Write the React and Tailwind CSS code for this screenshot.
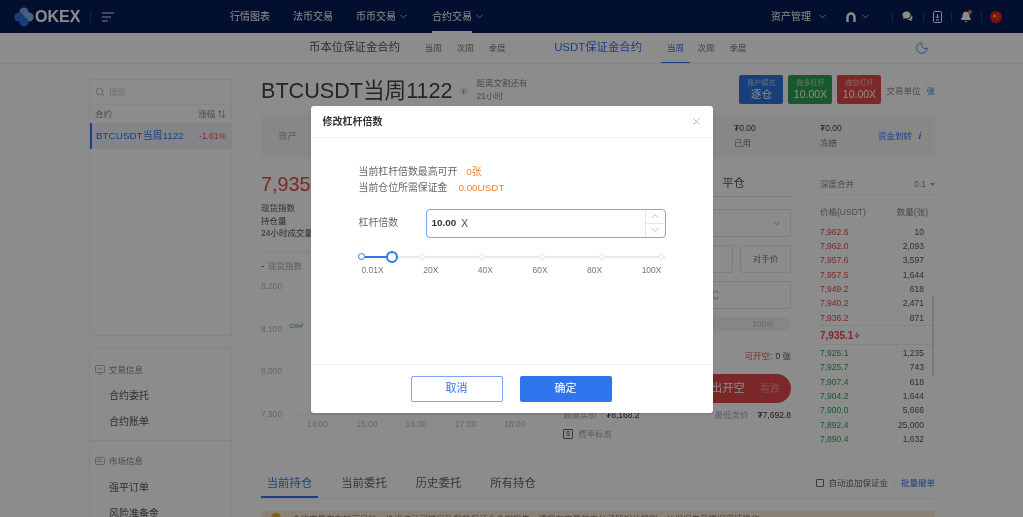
import { ChevronDown, ChevronUp, X, Search, Moon, Bell, ArrowDown } from 'lucide-react'

const font = { fontFamily: '"Liberation Sans", "Noto Sans CJK SC", sans-serif' }

const asks = [
  ['7,962.6', '10'],
  ['7,962.0', '2,093'],
  ['7,957.6', '3,597'],
  ['7,957.5', '1,644'],
  ['7,949.2', '618'],
  ['7,940.2', '2,471'],
  ['7,936.2', '871'],
]

const bids = [
  ['7,926.1', '1,235'],
  ['7,925.7', '743'],
  ['7,907.4', '618'],
  ['7,904.2', '1,644'],
  ['7,900.0', '5,666'],
  ['7,892.4', '25,000'],
  ['7,890.4', '1,632'],
]

function Logo() {
  return (
    <svg width="20" height="20" viewBox="0 0 20 20" className="shrink-0">
      <circle cx="10" cy="5" r="4.6" fill="#7fa6dc" />
      <circle cx="5" cy="10" r="4.6" fill="#2f6ee0" />
      <circle cx="15" cy="10" r="4.6" fill="#86b0ee" />
      <circle cx="10" cy="15" r="4.6" fill="#2f6ee0" />
    </svg>
  )
}

function Divider() {
  return <div className="w-px h-[11px] bg-white/15" />
}

function Header() {
  return (
    <header className="h-[33px] bg-[#041d55] flex items-center text-[10px] text-white shrink-0">
      <div className="ml-[14px] flex items-center w-[74px]">
        <Logo />
        <span className="ml-[1px] text-[16px] font-bold leading-none">OKEX</span>
      </div>
      <div className="ml-[2px]">
        <Divider />
      </div>
      <svg width="12" height="10" viewBox="0 0 12 10" className="ml-[11px]" stroke="#e6e9f0" strokeWidth="1" fill="none">
        <path d="M0 1h12M0 5h9M0 9h6" />
      </svg>
      <span className="ml-[116px]">行情图表</span>
      <span className="ml-[23px]">法币交易</span>
      <span className="ml-[23px]">币币交易</span>
      <ChevronDown size={11} strokeWidth={1.5} className="ml-[2px]" />
      <div className="ml-[23px] h-full flex items-center relative">
        合约交易
        <div className="absolute left-0 right-0 bottom-0 h-[2px] bg-white" />
      </div>
      <ChevronDown size={11} strokeWidth={1.5} className="ml-[2px]" />
      <span className="ml-[286px]">资产管理</span>
      <ChevronDown size={11} strokeWidth={1.5} className="ml-[6px]" />
      <svg width="12" height="12" viewBox="0 0 12 12" className="ml-[17px]" fill="none" stroke="#fff" strokeWidth="2.4">
        <path d="M2.5 11V6a3.5 3.5 0 0 1 7 0v5" />
      </svg>
      <ChevronDown size={11} strokeWidth={1.5} className="ml-[3px]" />
      <div className="ml-[21px]">
        <Divider />
      </div>
      <svg width="12" height="11" viewBox="0 0 12 11" className="ml-[9px]" fill="#fff">
        <path d="M4.5 0.5C2 0.5 0.5 2 0.5 4c0 1 .4 1.8 1 2.4L1 8.3l2-1c.5.2 1 .2 1.5.2 2.5 0 4-1.5 4-3.5S7 .5 4.5.5z" />
        <path d="M9.3 4.2c.2 2.2-1.6 3.9-4 4.1.6.6 1.5 1 2.5 1l2 1-.4-1.6c.7-.6 1.1-1.3 1.1-2.2 0-1-.6-1.8-1.2-2.3z" />
      </svg>
      <div className="ml-[9px]">
        <Divider />
      </div>
      <svg width="9" height="12" viewBox="0 0 9 12" className="ml-[9px]" fill="none" stroke="#fff" strokeWidth="1">
        <rect x="0.5" y="0.5" width="8" height="11" rx="1.2" />
        <path d="M4.5 3v4M3 5.5l1.5 1.5L6 5.5M3 9h3" />
      </svg>
      <div className="ml-[9px]">
        <Divider />
      </div>
      <div className="ml-[8px] relative">
        <Bell size={12} fill="#fff" />
        <div className="absolute -top-[1px] right-0 w-[4px] h-[4px] rounded-full bg-[#f5822a]" />
      </div>
      <div className="ml-[9px]">
        <Divider />
      </div>
      <svg width="12" height="12" viewBox="0 0 12 12" className="ml-[8px]">
        <circle cx="6" cy="6" r="6" fill="#e3201b" />
        <circle cx="4.5" cy="5" r="1.3" fill="#ffd83a" />
        <circle cx="7.3" cy="3.5" r="0.5" fill="#ffd83a" />
        <circle cx="8" cy="5.5" r="0.5" fill="#ffd83a" />
        <circle cx="7" cy="7.5" r="0.5" fill="#ffd83a" />
      </svg>
    </header>
  )
}

function SubTab({ children, active }) {
  return (
    <div className={`h-full flex items-center justify-center text-[8.5px] relative ${active ? 'text-[#3075ee] w-[29px]' : 'text-[#777] w-[32px]'}`}>
      {children}
      {active && <div className="absolute left-0 right-0 bottom-0 h-[1px] bg-[#3075ee]" />}
    </div>
  )
}

function SubNav() {
  return (
    <div className="h-[31px] shrink-0 bg-white border-b border-[#efefef] flex items-center">
      <span className="ml-[309px] text-[11.4px] text-[#555]">币本位保证金合约</span>
      <div className="ml-[17px] flex h-full items-center">
        <SubTab>当周</SubTab>
        <SubTab>次周</SubTab>
        <SubTab>季度</SubTab>
      </div>
      <span className="ml-[41px] text-[11.4px] text-[#3075ee]">USDT保证金合约</span>
      <div className="ml-[19px] flex h-full items-center">
        <SubTab active>当周</SubTab>
        <SubTab>次周</SubTab>
        <SubTab>季度</SubTab>
      </div>
      <Moon size={14} strokeWidth={1.3} className="ml-[161px] text-[#3075ee]" />
    </div>
  )
}

function SideLink({ children }) {
  return <div className="ml-[19px] h-[26px] flex items-center text-[10px] text-[#555]">{children}</div>
}

function Sidebar() {
  return (
    <aside className="w-[143px] shrink-0">
      <div className="h-[257px] bg-white border border-[#f0f0f0] rounded-[2px]">
        <div className="h-[25px] flex items-center border-b border-[#f4f4f4] px-[5px]">
          <Search size={10} strokeWidth={1.5} className="text-[#999]" />
          <span className="ml-[4px] text-[8.5px] text-[#ccc]">搜索</span>
        </div>
        <div className="h-[18px] flex items-center justify-between px-[5px] text-[8.5px] text-[#888]">
          <span>合约</span>
          <span>涨幅 ⇅</span>
        </div>
        <div className="h-[26px] bg-[#eef3fd] border-l-2 border-[#3075ee] flex items-center justify-between pl-[4px] pr-[5px] text-[9.9px]">
          <span className="text-[#3075ee]">BTCUSDT当周1122</span>
          <span className="text-[8.5px] text-[#e55050]">-1.61%</span>
        </div>
      </div>
      <div className="mt-[12px] bg-white border border-[#f0f0f0] rounded-[2px] h-[200px]">
        <div className="h-[92px] border-b border-[#f0f0f0] pt-[14px]">
          <div className="h-[14px] mb-[5px] flex items-center px-[5px] text-[8.5px] text-[#888]">
            <svg width="10" height="10" viewBox="0 0 10 10" fill="none" stroke="#999" strokeWidth="0.7">
              <rect x="0.5" y="0.5" width="9" height="7" rx="1" />
              <path d="M2 5l2-1.5 1.5 1L8 2.5M3 9h4" />
            </svg>
            <span className="ml-[4px]">交易信息</span>
          </div>
          <SideLink>合约委托</SideLink>
          <SideLink>合约账单</SideLink>
        </div>
        <div className="pt-[13px]">
          <div className="h-[14px] mb-[6px] flex items-center px-[5px] text-[8.5px] text-[#888]">
            <svg width="10" height="10" viewBox="0 0 10 10" fill="none" stroke="#999" strokeWidth="0.7">
              <rect x="0.5" y="1.5" width="9" height="7" rx="1" />
              <path d="M2 3.5h4M2 5.5h6" />
            </svg>
            <span className="ml-[4px]">市场信息</span>
          </div>
          <SideLink>强平订单</SideLink>
          <SideLink>风险准备金</SideLink>
        </div>
      </div>
    </aside>
  )
}

function LeverCard({ color, label, value }) {
  return (
    <div className={`w-[44px] h-[29px] mt-[-4px] rounded-[2px] ${color} flex flex-col items-center justify-center text-white`}>
      <span className="text-[7px] leading-[10px] opacity-60">{label}</span>
      <span className="text-[10.5px] leading-[13px]">{value}</span>
    </div>
  )
}

function TitleRow() {
  return (
    <div className="h-[36px] flex items-start">
      <span className="text-[21.6px] leading-[24px] text-[#444]">BTCUSDT当周1122</span>
      <div className="mt-[8px] ml-[7px] w-[8px] h-[8px] rounded-full bg-[#dfe8fb] text-[#3075ee] text-[6px] italic font-bold flex items-center justify-center">i</div>
      <div className="mt-[-2px] ml-[9px] text-[8.5px] leading-[13px] text-[#888]">
        <div>距离交割还有</div>
        <div>21小时</div>
      </div>
      <div className="ml-auto flex gap-[5px]">
        <LeverCard color="bg-[#2f74e0]" label="账户模式" value="逐仓" />
        <LeverCard color="bg-[#2fa052]" label="做多杠杆" value="10.00X" />
        <LeverCard color="bg-[#e34949]" label="做空杠杆" value="10.00X" />
      </div>
      <span className="ml-[5px] mt-[6px] text-[8.5px] leading-[12px] text-[#888]">交易单位</span>
      <span className="ml-[6px] mt-[6px] text-[8.5px] leading-[12px] text-[#3075ee]">张</span>
    </div>
  )
}

function AssetBar() {
  return (
    <div className="h-[42px] bg-[#f6f6f6] rounded-[3px] flex items-center text-[8.5px] text-[#777]">
      <span className="ml-[17px] text-[9.6px] text-[#aaa]">资产</span>
      <div className="ml-auto w-[86px] leading-[15px]">
        <div className="text-[#444]">₮0.00</div>
        <div>已用</div>
      </div>
      <div className="w-[58px] leading-[15px]">
        <div className="text-[#444]">₮0.00</div>
        <div>冻结</div>
      </div>
      <span className="text-[#3075ee]">资金划转</span>
      <span className="ml-[4px] mr-[11px] w-[8px] text-center italic font-bold text-[#3075ee]">i</span>
    </div>
  )
}

function ChartRow({ label, line }) {
  return (
    <div className="h-[14px] flex items-center text-[8.5px] text-[#bbb]">
      <span className="w-[29px]">{label}</span>
      {line && <div className="flex-1 h-px bg-[#f0f0f0]" />}
    </div>
  )
}

function MarketCol() {
  return (
    <div className="w-[302px] shrink-0 pt-[17px]">
      <div className="text-[19.8px] leading-[20px] text-[#e34949]">7,935.1</div>
      <div className="mt-[8px] text-[8.5px] leading-[12.7px] text-[#555]">
        <div>现货指数</div>
        <div>持仓量</div>
        <div>24小时成交量</div>
      </div>
      <div className="mt-[12px] border-t border-[#eee] pt-[6px] h-[22px] flex items-center text-[8.5px] text-[#aaa]">
        <span className="w-[3px] h-px bg-[#2fa052] mr-[4px]" />现货指数
      </div>
      <div className="mt-[5px]">
        <ChartRow label="8,200" />
        <div className="h-[29px]" />
        <div className="relative">
          <ChartRow label="8,100" />
          <svg width="24" height="10" viewBox="0 0 24 10" className="absolute left-[27px] -top-[1px]" fill="none" strokeWidth="0.6">
            <path d="M1 5l3-2 3 1 3 0 3 1 2-3" stroke="#3075ee" />
            <path d="M1 7l4-1 4 0 4 0 2-2" stroke="#2fa052" />
          </svg>
        </div>
        <div className="h-[28.5px]" />
        <ChartRow label="8,000" />
        <div className="h-[29px]" />
        <ChartRow label="7,900" line />
      </div>
      <div className="mt-[-4px] pl-[46px] flex gap-[28px] text-[8.5px] leading-[12px] text-[#bbb]">
        <span>14:00</span>
        <span>15:00</span>
        <span>16:00</span>
        <span>17:00</span>
        <span>18:00</span>
      </div>
    </div>
  )
}

function FormCol() {
  return (
    <div className="w-[228px] shrink-0 pt-[18px] text-[8.5px]">
      <div className="h-[22px] border-b border-[#e8e8e8] flex justify-end items-start pr-[46px] text-[11.4px] text-[#555]">平仓</div>
      <div className="mt-[12px] h-[28px] border border-[#e8e8e8] rounded-[2px] flex items-center justify-end pr-[8px]">
        <ChevronDown size={11} strokeWidth={1.5} className="text-[#888]" />
      </div>
      <div className="mt-[8px] flex gap-[7px]">
        <div className="flex-1 h-[28px] border border-[#e8e8e8] rounded-[2px]" />
        <div className="w-[51px] h-[28px] border border-[#e8e8e8] rounded-[2px] flex items-center justify-center text-[#777]">对手价</div>
      </div>
      <div className="mt-[8px] h-[28px] border border-[#e8e8e8] rounded-[2px] flex items-center justify-end pr-[71px] text-[10px] text-[#aaa]">C</div>
      <div className="mt-[8px] h-[14px] rounded-full bg-[#f4f4f4] flex items-center justify-end pr-[17px] text-[#bbb]">100%</div>
      <div className="mt-[19px] h-[12px] flex items-center justify-end">
        <span className="text-[#e34949]">可开空:</span>
        <span className="ml-[3px] text-[#555]">0 张</span>
      </div>
      <div className="mt-[12px] h-[29px] rounded-r-full bg-[#e34949] flex items-center justify-end pr-[11px]">
        <span className="text-[11.4px] text-white">卖出开空</span>
        <span className="ml-[15px] text-[10px] text-white/40">看跌</span>
      </div>
      <div className="mt-[6px] h-[12px] flex items-center justify-between">
        <div>
          <span className="text-[#aaa]">最高买价</span>
          <span className="ml-[9px] text-[#333]">₮8,168.2</span>
        </div>
        <div>
          <span className="text-[#aaa]">最低卖价</span>
          <span className="ml-[9px] text-[#333]">₮7,692.8</span>
        </div>
      </div>
      <div className="mt-[7px] h-[12px] flex items-center text-[#aaa]">
        <span className="w-[10px] h-[10px] border border-[#666] rounded-[1px] flex items-center justify-center text-[6.5px] text-[#555]">$</span>
        <span className="ml-[5px]">费率标准</span>
      </div>
    </div>
  )
}

function BookRow({ price, size, color }) {
  return (
    <div className="h-[14.33px] flex items-center justify-between pr-[11px] text-[8.5px]">
      <span className={color}>{price}</span>
      <span className="text-[#555]">{size}</span>
    </div>
  )
}

function BookCol() {
  return (
    <div className="w-[115px] ml-auto shrink-0 pt-[22px] relative">
      <div className="h-[16px] border-b border-[#eee] pb-[4px] flex items-start justify-between text-[8.5px] leading-[11px] text-[#888]">
        <span>深度合并</span>
        <span className="flex items-center">
          0.1
          <svg width="5" height="3" viewBox="0 0 5 3" className="ml-[4px]">
            <path d="M0 0h5L2.5 3z" fill="#999" />
          </svg>
        </span>
      </div>
      <div className="mt-[12px] h-[11px] flex justify-between pr-[7px] text-[8.5px] leading-[11px] text-[#888]">
        <span>价格(USDT)</span>
        <span>数量(张)</span>
      </div>
      <div className="mt-[7px]">
        {asks.map((r) => (
          <BookRow key={r[0]} price={r[0]} size={r[1]} color="text-[#e34949]" />
        ))}
      </div>
      <div className="h-[20px] border-y border-[#eee] flex items-center text-[10px] font-bold text-[#e34949]">
        7,935.1
        <ArrowDown size={8} strokeWidth={3} />
      </div>
      <div className="mt-[1px]">
        {bids.map((r) => (
          <BookRow key={r[0]} price={r[0]} size={r[1]} color="text-[#2fa052]" />
        ))}
      </div>
      <div className="absolute right-[1px] top-[138px] w-[2px] h-[82px] bg-[#ddd]" />
    </div>
  )
}

function Tab({ children, active }) {
  return (
    <div className={`h-full w-[57px] mr-[17.5px] relative flex items-center justify-center ${active ? 'text-[#3075ee]' : 'text-[#666]'}`}>
      {children}
      {active && <div className="absolute left-0 right-0 bottom-0 h-[1.5px] bg-[#3075ee]" />}
    </div>
  )
}

function BottomTabs() {
  return (
    <>
      <div className="h-[30px] border-b border-[#f2f2f2] flex items-center text-[11.4px]">
        <Tab active>当前持仓</Tab>
        <Tab>当前委托</Tab>
        <Tab>历史委托</Tab>
        <Tab>所有持仓</Tab>
        <div className="ml-auto flex items-center text-[8.5px] text-[#666]">
          <div className="w-[8px] h-[8px] border border-[#666] rounded-[1px]" />
          <span className="ml-[4px]">自动追加保证金</span>
          <div className="mx-[6px] w-px h-[9px] bg-[#eee]" />
          <span className="text-[#3075ee]">批量撤单</span>
        </div>
      </div>
      <div className="mt-[12px] h-[20px] bg-[#fdecd3] flex items-start pl-[10px] pt-[2px]">
        <div className="w-[10px] h-[10px] rounded-full bg-[#f5a623]" />
        <span className="ml-[11px] mt-[1px] text-[8.5px] leading-[10px] text-[#777] whitespace-nowrap">
          合约交易存在较高风险，价格波动可能导致您的保证金全部损失，请您在交易前充分了解相关规则，并根据自身情况谨慎操作。
        </span>
      </div>
    </>
  )
}

function LeverageSlider() {
  const labels = ['0.01X', '20X', '40X', '60X', '80X', '100X']
  return (
    <div className="ml-[48px] w-[303px] mt-[14px]">
      <div className="relative w-[306px] h-[10px] flex items-center">
        <div className="absolute left-[3px] right-0 h-[2px] bg-[#eaeaea]" />
        <div className="relative w-full flex items-center justify-between">
          <div className="w-[7px] h-[7px] -ml-[0.5px] rounded-full bg-white border-[1.5px] border-[#3075ee]" />
          {[1, 2, 3, 4, 5].map((i) => (
            <div key={i} className="w-[6px] h-[6px] rounded-full bg-white border border-[#e6e6e6]" />
          ))}
        </div>
        <div className="absolute left-[6px] w-[24px] h-[2px] bg-[#3075ee]" />
        <div className="absolute left-[27px] w-[12px] h-[12px] rounded-full bg-white border-2 border-[#3075ee]" />
      </div>
      <div className="mt-[3px] ml-[3px] flex justify-between text-[8.5px] leading-[11px] text-[#777]">
        {labels.map((l) => (
          <span key={l}>{l}</span>
        ))}
      </div>
    </div>
  )
}

function Modal() {
  return (
    <div className="fixed inset-0 pt-[1px] bg-black/45 flex items-center justify-center">
      <div className="w-[402px] h-[307px] bg-white rounded-[3px] flex flex-col shadow-sm">
        <div className="h-[32px] shrink-0 border-b border-[#f2f2f2] flex items-center justify-between pl-[12px] pr-[11px]">
          <span className="text-[10px] font-bold text-[#333]">修改杠杆倍数</span>
          <X size={11} strokeWidth={1.5} className="text-[#999]" />
        </div>
        <div className="flex-1">
          <div className="ml-[48px] mt-[26px] text-[9.9px] leading-[16px] text-[#666]">
            <div>
              当前杠杆倍数最高可开<span className="ml-[9px] text-[#f5822a]">0张</span>
            </div>
            <div>
              当前仓位所需保证金<span className="ml-[11px] text-[#f5822a]">0.00USDT</span>
            </div>
          </div>
          <div className="mt-[13px] ml-[48px] flex items-center">
            <span className="w-[67px] text-[9.9px] text-[#666]">杠杆倍数</span>
            <div className="w-[240px] h-[29px] border border-[#7aa5f8] rounded-[4px] flex items-center pl-[5px]">
              <span className="text-[9.9px] font-bold text-[#333]">10.00</span>
              <span className="ml-[5px] text-[10px] text-[#444]">X</span>
              <div className="ml-auto w-[20px] h-full border-l border-[#e8e8e8] flex flex-col text-[#999]">
                <div className="flex-1 flex items-center justify-center border-b border-[#e8e8e8]">
                  <ChevronUp size={12} strokeWidth={1.3} />
                </div>
                <div className="flex-1 flex items-center justify-center">
                  <ChevronDown size={12} strokeWidth={1.3} />
                </div>
              </div>
            </div>
          </div>
          <LeverageSlider />
        </div>
        <div className="h-[49px] shrink-0 border-t border-[#f2f2f2] flex items-start pl-[100px] pt-[11px] gap-[17px] text-[11px]">
          <div className="w-[92px] h-[26px] rounded-[2px] border border-[#7aa5f8] text-[#3075ee] flex items-center justify-center">取消</div>
          <div className="w-[92px] h-[26px] rounded-[2px] bg-[#3075ee] text-white flex items-center justify-center">确定</div>
        </div>
      </div>
    </div>
  )
}

export default function App() {
  return (
    <div className="h-screen overflow-hidden bg-white flex flex-col blur-[0.4px]" style={font}>
      <Header />
      <SubNav />
      <div className="flex pl-[89px] pt-[15px] pr-[88px] gap-[29px]">
        <Sidebar />
        <main className="flex-1 min-w-0">
          <TitleRow />
          <AssetBar />
          <div className="flex">
            <MarketCol />
            <FormCol />
            <BookCol />
          </div>
          <div className="mt-[22px]">
            <BottomTabs />
          </div>
        </main>
      </div>
      <Modal />
    </div>
  )
}
